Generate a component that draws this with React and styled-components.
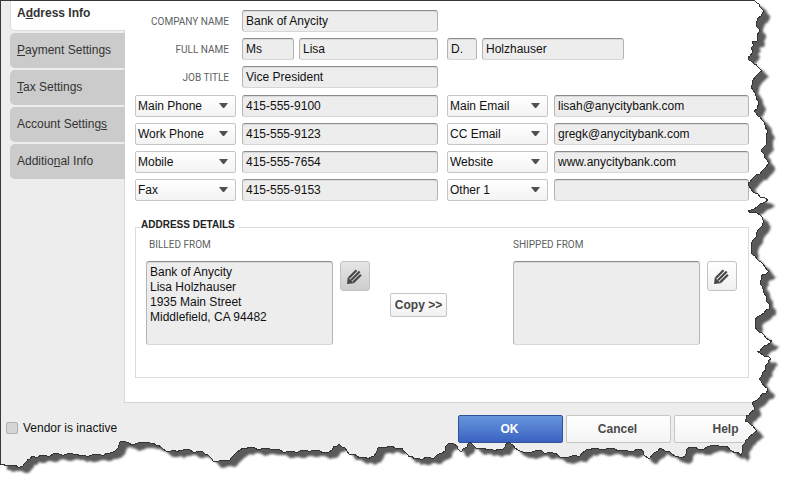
import React from 'react';
import styled, { createGlobalStyle, css } from 'styled-components';

const GlobalStyle = createGlobalStyle`
  * {
    box-sizing: border-box;
  }

  body {
    margin: 0;
    background: #fff;
    color: #1a1a1a;
    font-family: 'Liberation Sans', Arial, sans-serif;
    font-size: 12px;
  }

  button,
  input,
  select,
  textarea {
    margin: 0;
    font: inherit;
    color: inherit;
  }
`;

const Page = styled.div`
  position: relative;
  display: flex;
  flex-direction: column;
  min-height: 100vh;
  overflow: hidden;
`;

const Window = styled.div`
  flex: 1;
  border-top: 1px solid #3a363a;
  border-left: 1px solid #3a363a;
  background: #ededed;
  overflow: hidden;
`;

const Main = styled.div`
  display: flex;
`;

const Tabs = styled.nav`
  position: relative;
  flex: 0 0 124px;
  display: flex;
  flex-direction: column;
  gap: 2px;
  margin-top: -5px;
  padding-left: 9px;
`;

const Tab = styled.button`
  height: 35px;
  padding: 0 7px 2px;
  border: 0;
  border-radius: 5px 0 0 5px;
  background: #cbcbcb;
  color: #333;
  text-align: left;

  ${({ $active }) =>
    $active &&
    css`
      border: 1px solid #dcdcdc;
      border-right: 0;
      padding: 0 6px 1px;
      background: #fff;
      font-weight: 700;
    `}
`;

const Panel = styled.main`
  flex: 1;
  min-width: 0;
  margin-left: -1px;
  padding: 9px 43px 24px 10px;
  border-left: 1px solid #d8d8d8;
  border-bottom: 1px solid #d4d4d4;
  background: #fff;
`;

const Rows = styled.div`
  display: grid;
  grid-template-columns: 303px minmax(0, 1fr);
  gap: 6px 9px;
  margin-bottom: ${({ $space }) => $space}px;
`;

const Pair = styled.div`
  display: flex;
  gap: 6px;
`;

const Names = styled.div`
  flex: 1;
  display: flex;
  gap: 5px;
  min-width: 0;
`;

const caption = css`
  color: #5c5f63;
  font-family: Roboto, 'Liberation Sans', sans-serif;
  font-size: 10px;
`;

const Label = styled.label`
  ${caption}
  flex: 0 0 101px;
  height: 22px;
  padding-right: 7px;
  line-height: 24px;
  text-align: right;
`;

const sunken = css`
  border: 1px solid #b4b4b4;
  border-top-color: #8c8c8c;
  border-bottom-color: #d6d6d6;
  border-radius: 3px;
  outline: 0;
  background: #ededed;
  box-shadow: inset 0 1px 0 #dadada;
  color: #111;
`;

const Field = styled.input`
  ${sunken}
  flex: ${({ $width }) => ($width ? `0 0 ${$width}px` : '1')};
  width: 0;
  min-width: 0;
  height: 22px;
  padding: 0 3px;
`;

const SelectBox = styled.div`
  position: relative;
  flex: 0 0 101px;

  svg {
    position: absolute;
    top: 8px;
    right: 8px;
    pointer-events: none;
  }
`;

const Select = styled.select`
  display: block;
  appearance: none;
  width: 100%;
  height: 22px;
  padding: 0 18px 1px 2px;
  border: 1px solid #c6c6c6;
  border-radius: 2px;
  background: linear-gradient(#fff, #f3f3f3);
  color: #111;
`;

const Details = styled.fieldset`
  display: flex;
  min-width: 0;
  height: 159px;
  margin: 0;
  padding: 3px 11px 0 10px;
  border: 1px solid #dcdcdc;
`;

const Legend = styled.legend`
  margin-left: -6px;
  padding: 0 4px 5px 1px;
  color: #222;
  font-size: 10px;
  font-weight: 700;
  line-height: 12px;
`;

const Address = styled.div`
  display: flex;
  flex-direction: column;
  gap: 10px;
`;

const AddressLabel = styled.label`
  ${caption}
  padding-left: ${({ $inset }) => $inset || 0}px;
  line-height: 12px;
`;

const AddressBody = styled.div`
  display: flex;
  align-items: flex-start;
  gap: 7px;
`;

const AddressText = styled.textarea`
  ${sunken}
  width: 187px;
  height: 84px;
  padding: 3px;
  line-height: 15px;
  resize: none;
`;

const IconButton = styled.button`
  display: flex;
  align-items: center;
  justify-content: center;
  width: 30px;
  height: 30px;
  padding: 0;
  border: 1px solid #c2c2c2;
  border-radius: 3px;
  background: ${({ $pressed }) =>
    $pressed ? 'linear-gradient(#e6e6e6, #cdcdcd)' : 'linear-gradient(#fff, #f0f0f0)'};
`;

const CopyButton = styled.button`
  width: 57px;
  height: 24px;
  margin: 54px auto 0 20px;
  padding: 0;
  border: 1px solid #c6c6c6;
  border-radius: 2px;
  background: linear-gradient(#fff, #f1f1f1);
  color: #444;
  font-weight: 700;
`;

const Footer = styled.footer`
  display: flex;
  align-items: flex-start;
  justify-content: space-between;
  padding: 12px 13px 0 5px;
`;

const Inactive = styled.label`
  display: flex;
  align-items: center;
  gap: 5px;
  height: 25px;
  color: #111;
`;

const Checkbox = styled.input`
  appearance: none;
  width: 12px;
  height: 12px;
  border: 1px solid #b0b0b0;
  border-radius: 2px;
  background: #d6d6d6;
`;

const Actions = styled.div`
  display: flex;
  gap: 3px;
`;

const Action = styled.button`
  width: 105px;
  height: 28px;
  padding: 0 2px 0 0;
  border: 1px solid #c6c6c6;
  border-radius: 2px;
  background: linear-gradient(#fff, #f4f4f4);
  color: #4a4a4a;
  font-weight: 700;

  ${({ $primary }) =>
    $primary &&
    css`
      border-color: #2f5396;
      background: linear-gradient(#6795dc, #3a62c2);
      color: #fff;
    `}
`;

const Torn = styled.svg`
  position: absolute;
  top: 0;
  left: 0;
  width: 100%;
  height: 100%;
  pointer-events: none;
`;

// corners of the rip, from the top right down and back along the bottom
const rip = [
  [754, 0], [757, 3], [759, 4], [760, 7], [763, 12], [761, 16], [758, 18], [756, 23], [759, 32],
  [757, 41], [752, 42], [754, 45], [751, 48], [752, 53], [748, 57], [749, 60], [756, 64], [762, 71],
  [755, 77], [751, 87], [755, 93], [758, 101], [757, 107], [754, 111], [760, 117], [765, 125],
  [768, 132], [766, 137], [767, 144], [761, 151], [764, 157], [768, 162], [764, 169], [755, 176],
  [748, 183], [753, 192], [760, 197], [768, 200], [757, 207], [748, 211], [757, 213], [764, 221],
  [758, 230], [756, 237], [752, 242], [751, 253], [757, 259], [769, 271], [761, 276], [760, 284],
  [763, 291], [766, 298], [769, 309], [761, 315], [755, 320], [757, 330], [766, 338], [772, 340],
  [762, 348], [757, 351], [771, 359], [766, 365], [766, 370], [759, 379], [768, 390], [760, 397],
  [752, 403], [754, 410], [746, 416], [745, 421], [751, 425], [757, 431], [746, 440], [740, 456],
  [737, 452], [732, 451], [727, 446], [710, 446], [698, 449], [690, 447], [682, 458], [675, 456],
  [667, 451], [660, 448], [650, 458], [645, 456], [640, 449], [628, 451], [615, 449], [587, 449],
  [580, 456], [563, 457], [550, 452], [535, 451], [523, 452], [515, 448], [509, 442], [503, 449],
  [495, 451], [490, 449], [478, 449], [469, 442], [462, 451], [460, 451], [454, 444], [448, 444],
  [442, 453], [434, 458], [417, 458], [409, 457], [402, 448], [392, 446], [378, 448], [374, 456],
  [368, 459], [357, 456], [349, 454], [345, 448], [339, 444], [334, 446], [329, 452], [305, 450],
  [295, 452], [270, 449], [243, 448], [237, 452], [230, 460], [213, 461], [208, 455], [202, 451],
  [183, 450], [177, 452], [163, 449], [153, 443], [140, 442], [135, 444], [120, 442], [115, 451],
  [110, 453], [80, 456], [73, 454], [53, 454], [50, 456], [32, 456], [27, 459], [23, 466],
  [12, 465], [0, 464],
];

// breaks every long side into short uneven steps
const roughen = (points) =>
  points.flatMap(([x, y], i) => {
    const [nx, ny] = points[i + 1] || [x, y];
    const steps = Math.max(1, Math.round(Math.hypot(nx - x, ny - y) / 3));
    return Array.from({ length: steps }, (_, s) => {
      const shift = s === 0 ? 0 : Math.round(Math.sin(i * 7 + s * 5));
      const steep = Math.abs(ny - y) > Math.abs(nx - x);
      const px = Math.round(x + ((nx - x) * s) / steps) + (steep ? shift : 0);
      const py = Math.round(y + ((ny - y) * s) / steps) + (steep ? 0 : shift);
      return `${px} ${py}`;
    });
  });

const edge = roughen(rip).join(' L');

const TornEdge = () => (
  <Torn viewBox='0 0 792 486' preserveAspectRatio='none' aria-hidden='true'>
    <defs>
      <clipPath id='outside'>
        <path d={`M${edge} V486 H792 V0 Z`} />
      </clipPath>
      <filter id='soft' x='-5%' y='-5%' width='110%' height='110%'>
        <feGaussianBlur stdDeviation='1.2' />
      </filter>
    </defs>
    <g clipPath='url(#outside)'>
      <rect width='792' height='486' fill='#fff' />
      <path
        d={`M${edge} V8 Z`}
        transform='translate(7 6)'
        fill='#5a5a5a'
        filter='url(#soft)'
      />
    </g>
    <path d={`M${edge}`} fill='none' stroke='#333' shapeRendering='crispEdges' />
  </Torn>
);

const Arrow = () => (
  <svg width='9' height='5' viewBox='0 0 9 5' aria-hidden='true'>
    <path d='M0 0h9L5.5 4.4a1.3 1.3 0 0 1-2 0z' fill='#505050' />
  </svg>
);

const Pencil = () => (
  <svg width='16' height='16' viewBox='0 0 16 16' aria-hidden='true'>
    <path d='M0 16 .8 9.200 6.800 15.200z' fill='#474747' />
    <path
      d='M1.800 10 9.500 2.300M4 12.200 12.700 3.500M6.200 14.400 13.900 6.700'
      stroke='#474747'
      strokeWidth='2.2'
    />
  </svg>
);

const Dropdown = ({ name }) => (
  <SelectBox>
    <Select aria-label={`${name} type`} defaultValue={name}>
      <option>{name}</option>
    </Select>
    <Arrow />
  </SelectBox>
);

const contacts = [
  ['Main Phone', '415-555-9100'],
  ['Main Email', 'lisah@anycitybank.com'],
  ['Work Phone', '415-555-9123'],
  ['CC Email', 'gregk@anycitybank.com'],
  ['Mobile', '415-555-7654'],
  ['Website', 'www.anycitybank.com'],
  ['Fax', '415-555-9153'],
  ['Other 1', ''],
];

const billed = 'Bank of Anycity\nLisa Holzhauser\n1935 Main Street\nMiddlefield, CA 94482';

const App = () => {
  return (
    <>
      <GlobalStyle />
      <Page>
        <Window>
          <Main>
            <Tabs>
              <Tab $active>
                A<u>d</u>dress Info
              </Tab>
              <Tab>
                <u>P</u>ayment Settings
              </Tab>
              <Tab>
                <u>T</u>ax Settings
              </Tab>
              <Tab>
                Account Setting<u>s</u>
              </Tab>
              <Tab>
                Additio<u>n</u>al Info
              </Tab>
            </Tabs>
            <Panel>
              <Rows $space={7}>
                <Pair>
                  <Label htmlFor='company'>COMPANY NAME</Label>
                  <Field id='company' defaultValue='Bank of Anycity' />
                </Pair>
                <span />
                <Pair>
                  <Label htmlFor='title'>FULL NAME</Label>
                  <Names>
                    <Field id='title' $width={52} defaultValue='Ms' />
                    <Field aria-label='First name' defaultValue='Lisa' />
                  </Names>
                </Pair>
                <Names>
                  <Field aria-label='Middle initial' $width={30} defaultValue='D.' />
                  <Field aria-label='Last name' $width={142} defaultValue='Holzhauser' />
                </Names>
                <Pair>
                  <Label htmlFor='job'>JOB TITLE</Label>
                  <Field id='job' defaultValue='Vice President' />
                </Pair>
              </Rows>
              <Rows $space={18}>
                {contacts.map(([name, value]) => (
                  <Pair key={name}>
                    <Dropdown name={name} />
                    <Field aria-label={name} defaultValue={value} />
                  </Pair>
                ))}
              </Rows>
              <Details>
                <Legend>ADDRESS DETAILS</Legend>
                <Address>
                  <AddressLabel htmlFor='billed' $inset={3}>
                    BILLED FROM
                  </AddressLabel>
                  <AddressBody>
                    <AddressText id='billed' defaultValue={billed} />
                    <IconButton $pressed aria-label='Edit billed from'>
                      <Pencil />
                    </IconButton>
                  </AddressBody>
                </Address>
                <CopyButton>Copy &gt;&gt;</CopyButton>
                <Address>
                  <AddressLabel htmlFor='shipped'>SHIPPED FROM</AddressLabel>
                  <AddressBody>
                    <AddressText id='shipped' />
                    <IconButton aria-label='Edit shipped from'>
                      <Pencil />
                    </IconButton>
                  </AddressBody>
                </Address>
              </Details>
            </Panel>
          </Main>
          <Footer>
            <Inactive>
              <Checkbox type='checkbox' />
              Vendor is inactive
            </Inactive>
            <Actions>
              <Action $primary>OK</Action>
              <Action>Cancel</Action>
              <Action>Help</Action>
            </Actions>
          </Footer>
        </Window>
        <TornEdge />
      </Page>
    </>
  );
};

export default App;
